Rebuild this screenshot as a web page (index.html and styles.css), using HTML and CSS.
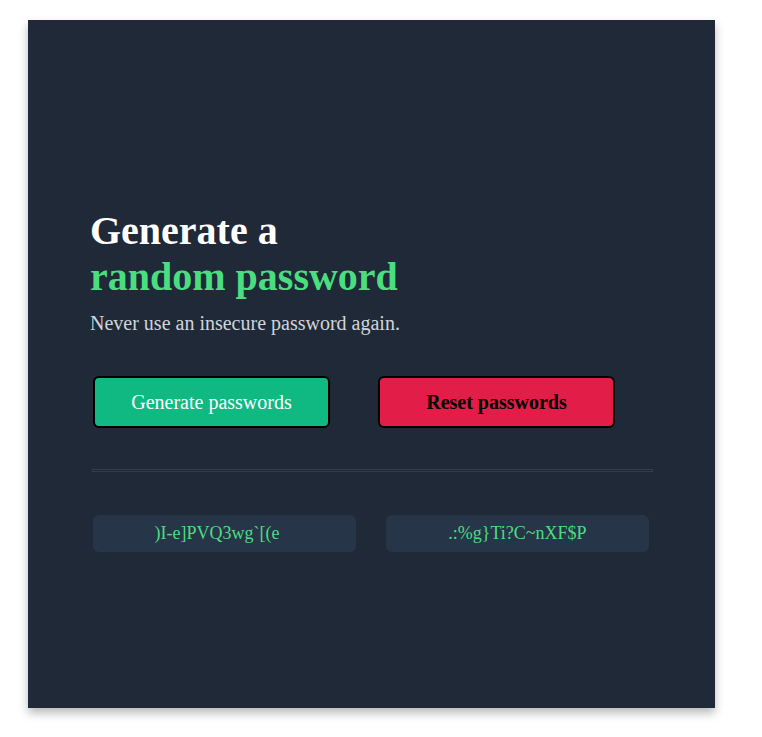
FILE: index.html
```html
<!DOCTYPE html>
<html lang="en">
<head>
<meta charset="utf-8">
<title>Password Generator</title>
<link rel="stylesheet" href="styles.css">
</head>
<body>
<main class="card">
  <div class="content">
    <h1 class="title">Generate a<br><span class="accent">random password</span></h1>
    <p class="subtitle">Never use an insecure password again.</p>
    <div class="actions">
      <button class="btn btn-generate">Generate passwords</button>
      <button class="btn btn-reset">Reset passwords</button>
    </div>
    <hr class="divider">
    <div class="passwords">
      <div class="password password-first">)I-e]PVQ3wg`[(e</div>
      <div class="password">.:%g}Ti?C~nXF$P</div>
    </div>
  </div>
</main>
</body>
</html>
```

FILE: styles.css
```css
html, body {
  margin: 0;
  padding: 0;
  background: #ffffff;
}

body {
  font-family: "Liberation Serif", "Times New Roman", serif;
  padding: 20px 0 29px 28px;
}

.card {
  box-sizing: border-box;
  width: 687px;
  height: 688px;
  background: #1f2937;
  box-shadow: 0 5px 9px rgba(0, 0, 0, 0.28);
  padding: 188px 62px 0 62px;
}

.content {
  display: flex;
  flex-direction: column;
}

.title {
  margin: 0;
  font-size: 40px;
  font-weight: bold;
  color: #ffffff;
  line-height: 46px;
}

.accent {
  color: #4ade80;
}

.subtitle {
  margin: 12px 0 0 0;
  font-size: 20px;
  line-height: 23px;
  color: #d1d5db;
}

.actions {
  display: flex;
  gap: 48px;
  margin-top: 41px;
  padding-left: 3px;
}

.btn {
  box-sizing: border-box;
  width: 237px;
  height: 52px;
  border: 2px solid #000000;
  border-radius: 6px;
  font-family: "Liberation Serif", "Times New Roman", serif;
  font-size: 20px;
  cursor: pointer;
}

.btn-generate {
  background: #10b981;
  color: #ffffff;
}

.btn-reset {
  background: #e11d48;
  color: #000000;
  font-weight: bold;
}

.divider {
  box-sizing: border-box;
  width: 561px;
  height: 3px;
  margin: 41px 0 0 2px;
  border: 1px solid #323c4b;
  background: transparent;
}

.passwords {
  display: flex;
  gap: 30px;
  margin-top: 43px;
  padding-left: 3px;
}

.password {
  box-sizing: border-box;
  width: 263px;
  height: 37px;
  background: #273549;
  border-radius: 6px;
  color: #4ade80;
  font-size: 18px;
  display: flex;
  align-items: center;
  justify-content: center;
}

.password-first {
  padding-right: 15px;
}
```
